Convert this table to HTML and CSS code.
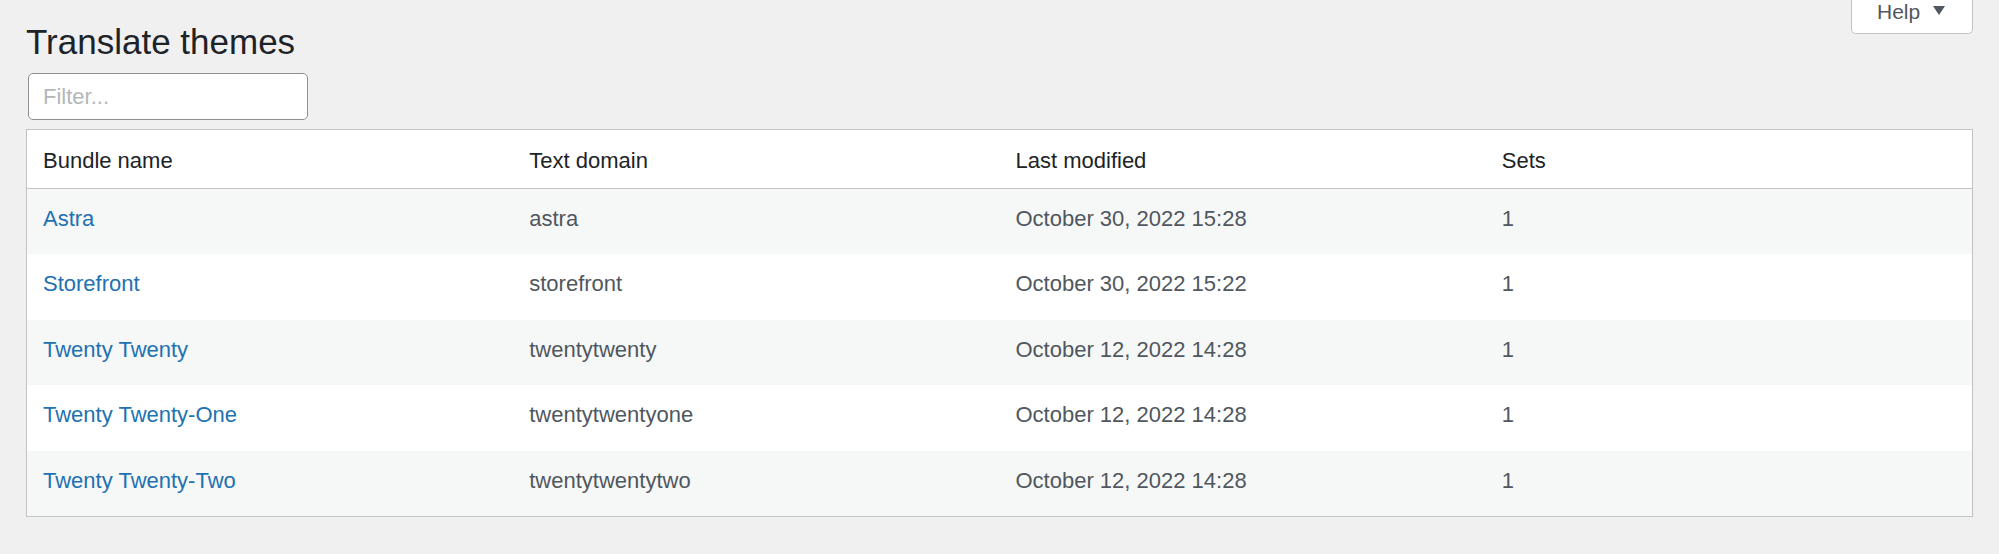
FILE: index.html
```html
<!DOCTYPE html>
<html lang="en">
<head>
<meta charset="utf-8">
<title>Translate themes</title>
<link rel="stylesheet" href="styles.css">
</head>
<body>
<div class="wrap">
  <div class="top">
    <div class="heading">
      <h1 class="title">Translate themes</h1>
      <input class="filter" type="text" placeholder="Filter...">
    </div>
    <button class="help" type="button">Help <span class="help-arrow"></span></button>
  </div>
  <table class="bundles">
    <thead>
      <tr>
        <th>Bundle name</th>
        <th>Text domain</th>
        <th>Last modified</th>
        <th>Sets</th>
      </tr>
    </thead>
    <tbody>
      <tr class="alt">
        <td><a href="#">Astra</a></td>
        <td>astra</td>
        <td>October 30, 2022 15:28</td>
        <td>1</td>
      </tr>
      <tr>
        <td><a href="#">Storefront</a></td>
        <td>storefront</td>
        <td>October 30, 2022 15:22</td>
        <td>1</td>
      </tr>
      <tr class="alt">
        <td><a href="#">Twenty Twenty</a></td>
        <td>twentytwenty</td>
        <td>October 12, 2022 14:28</td>
        <td>1</td>
      </tr>
      <tr>
        <td><a href="#">Twenty Twenty-One</a></td>
        <td>twentytwentyone</td>
        <td>October 12, 2022 14:28</td>
        <td>1</td>
      </tr>
      <tr class="alt">
        <td><a href="#">Twenty Twenty-Two</a></td>
        <td>twentytwentytwo</td>
        <td>October 12, 2022 14:28</td>
        <td>1</td>
      </tr>
    </tbody>
  </table>
</div>
</body>
</html>
```
FILE: styles.css
```css
html, body {
  margin: 0;
  padding: 0;
  background: #f0f0f1;
}

body {
  font-family: "Liberation Sans", Arial, sans-serif;
  color: #1d2327;
}

.wrap {
  padding: 0 26px;
}

.top {
  display: flex;
  justify-content: space-between;
  align-items: flex-start;
}

.heading {
  display: flex;
  flex-direction: column;
  align-items: flex-start;
}

.title {
  margin: 21px 0 0;
  font-size: 35px;
  line-height: 42px;
  font-weight: 400;
  color: #1d2327;
}

.filter {
  box-sizing: border-box;
  margin: 10px 0 0 2px;
  width: 280px;
  height: 47px;
  padding: 0 14px;
  border: 1px solid #8c8f94;
  border-radius: 5px;
  background: #fff;
  font-family: inherit;
  font-size: 22px;
  color: #2c3338;
  outline: none;
}

.filter::placeholder {
  color: #b4b7ba;
}

.help {
  box-sizing: border-box;
  display: flex;
  align-items: flex-start;
  gap: 13px;
  width: 122px;
  height: 34px;
  margin: 0;
  padding: 0 24px 0 25px;
  border: 1px solid #c3c4c7;
  border-top: none;
  border-radius: 0 0 5px 5px;
  background: #fff;
  font-family: inherit;
  font-size: 21px;
  line-height: 23px;
  color: #50575e;
  cursor: pointer;
}

.help-arrow {
  width: 0;
  height: 0;
  margin-top: 6px;
  border-left: 6px solid transparent;
  border-right: 6px solid transparent;
  border-top: 9px solid #50575e;
}

.bundles {
  box-sizing: border-box;
  width: 100%;
  margin-top: 9px;
  table-layout: fixed;
  border-collapse: separate;
  border-spacing: 0;
  border: 1px solid #c3c4c7;
  box-shadow: 0 1px 1px rgba(0, 0, 0, 0.06);
  background: #fff;
  font-size: 22px;
}

.bundles th {
  padding: 18px 16px 14px;
  line-height: 26px;
  text-align: left;
  font-weight: 400;
  color: #1d2327;
  border-bottom: 1px solid #c3c4c7;
}

.bundles td {
  padding: 17px 16px 22.4px;
  line-height: 26px;
  color: #50575e;
}

.bundles tr.alt td {
  background: #f6f7f7;
}

.bundles a {
  color: #2271b1;
  text-decoration: none;
}
```
